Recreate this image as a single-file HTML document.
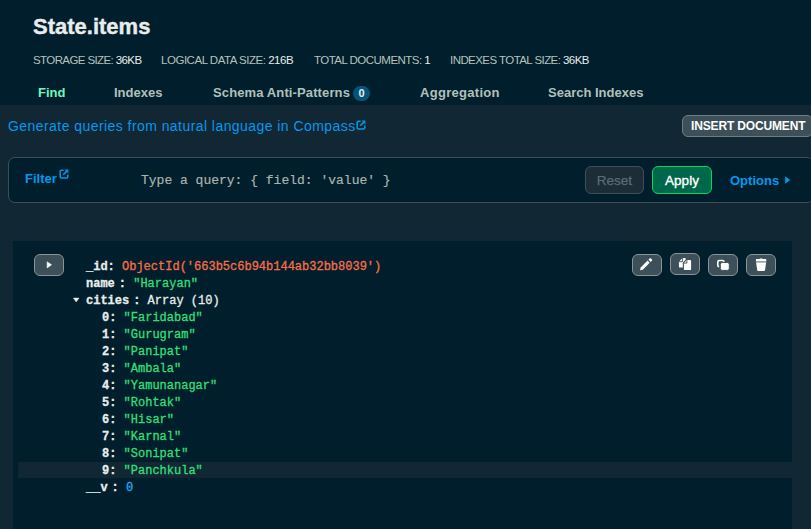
<!DOCTYPE html>
<html><head><meta charset="utf-8">
<style>
*{margin:0;padding:0;box-sizing:border-box}
html,body{width:811px;height:529px;overflow:hidden;background:#112733;font-family:"Liberation Sans",sans-serif}
.a{position:absolute;white-space:pre}
#hdr{position:absolute;left:0;top:0;width:811px;height:105px;background:#001E2B}
#title{left:33px;top:14px;font-size:22px;font-weight:bold;color:#E8EDEB;line-height:26px;-webkit-text-stroke:0.4px #E8EDEB}
.st{top:53px;font-size:11.5px;letter-spacing:-0.65px;color:#B6C2BE;line-height:14px}
.st b{font-weight:normal;color:#E8EDEB}
.tab{top:85px;font-size:13px;font-weight:bold;color:#B2C0BB;line-height:16px}
#badge{left:353px;top:86px;width:17px;height:15px;border-radius:8px;background:#03557A;color:#E8EDEB;font-size:11px;font-weight:bold;text-align:center;line-height:15px}
#link{left:8px;top:118px;font-size:14px;color:#0498EC;line-height:16px;letter-spacing:0.44px}
#ins{left:682px;top:115px;width:131px;height:22px;border-radius:6px;background:#3D4F58;border:1px solid #6F7E84}
#inst{left:691px;top:119px;font-size:12px;font-weight:bold;color:#FFFFFF;line-height:14px;letter-spacing:-0.15px}
#fbar{left:8px;top:157px;width:806px;height:46px;border-radius:7px;background:#001E2B;border:1px solid #3D4F58}
#ftxt{left:25px;top:172px;font-size:13px;font-weight:bold;color:#0498EC;line-height:14px}
#ph{left:141px;top:173px;font-family:"Liberation Mono",monospace;font-size:13px;color:#A8B3AE;-webkit-text-stroke:0.2px #A8B3AE;line-height:15px}
#reset{left:585px;top:166px;width:59px;height:28px;border-radius:6px;background:#1C2D38;border:1px solid #3D4F58;color:#5C6C75;font-size:13.5px;text-align:center;line-height:27px;-webkit-text-stroke:0.25px #5C6C75}
#apply{left:652px;top:166px;width:60px;height:28px;border-radius:6px;background:#00684A;border:1px solid #00D95E;color:#FFFFFF;font-size:13.5px;text-align:center;line-height:28px;-webkit-text-stroke:0.35px #fff}
#opt{left:730px;top:174px;font-size:13px;font-weight:bold;color:#0498EC;line-height:14px}
#card{left:13px;top:241px;width:779px;height:300px;background:#001E2B}
#hl{left:18px;top:462px;width:774px;height:16px;background:#112733}
.btn{top:254px;width:30px;height:22px;border-radius:6px;background:#3D4F58;border:1px solid #889397}
.code{font-family:"Liberation Mono",monospace;font-size:12px;line-height:17px;color:#E8EDEB;-webkit-text-stroke:0.3px currentColor}
.k{font-weight:bold;color:#E8EDEB}
.km{margin-right:4px}
.oid{color:#F96D4A}
.s{color:#33DF78}
.n{color:#22A8F0}
</style></head><body>
<div id="hdr"></div>
<div class="a" id="title">State.items</div>
<div class="a st" style="left:33px;letter-spacing:-0.6px">STORAGE SIZE: <b>36KB</b></div>
<div class="a st" style="left:161px;letter-spacing:-0.47px">LOGICAL DATA SIZE: <b>216B</b></div>
<div class="a st" style="left:314px;letter-spacing:-0.53px">TOTAL DOCUMENTS: <b>1</b></div>
<div class="a st" style="left:450px;letter-spacing:-0.56px">INDEXES TOTAL SIZE: <b>36KB</b></div>
<div class="a tab" style="left:38px;color:#71F6BA">Find</div>
<div class="a tab" style="left:114px">Indexes</div>
<div class="a tab" style="left:213px;letter-spacing:0.12px">Schema Anti-Patterns</div>
<div class="a" id="badge">0</div>
<div class="a tab" style="left:420px;letter-spacing:0.3px">Aggregation</div>
<div class="a tab" style="left:548px">Search Indexes</div>

<div class="a" id="link">Generate queries from natural language in Compass</div>
<svg class="a" style="left:356px;top:120px;color:#0498EC" width="10" height="10" viewBox="0 0 10 10"><path d="M4.6 1.3H2.4Q1.2 1.3 1.2 2.5V7.7Q1.2 8.9 2.4 8.9H7.6Q8.8 8.9 8.8 7.7V5.4" fill="none" stroke="currentColor" stroke-width="1.5"/><path d="M4.2 5.8L7.6 2.4" stroke="currentColor" stroke-width="1.5"/><path d="M5.6 0.6H9.4V4.4Z" fill="currentColor"/></svg>
<div class="a" id="ins"></div>
<div class="a" id="inst">INSERT DOCUMENT</div>

<div class="a" id="fbar"></div>
<div class="a" id="ftxt">Filter</div>
<svg class="a" style="left:59px;top:169px;color:#0498EC" width="10" height="10" viewBox="0 0 10 10"><path d="M4.6 1.3H2.4Q1.2 1.3 1.2 2.5V7.7Q1.2 8.9 2.4 8.9H7.6Q8.8 8.9 8.8 7.7V5.4" fill="none" stroke="currentColor" stroke-width="1.5"/><path d="M4.2 5.8L7.6 2.4" stroke="currentColor" stroke-width="1.5"/><path d="M5.6 0.6H9.4V4.4Z" fill="currentColor"/></svg>
<div class="a" id="ph">Type a query: { field: 'value' }</div>
<div class="a" id="reset">Reset</div>
<div class="a" id="apply">Apply</div>
<div class="a" id="opt">Options</div>
<svg class="a" style="left:784px;top:175px" width="8" height="10" viewBox="0 0 8 10"><path d="M1.2 1.2L6.2 5L1.2 8.8Z" fill="#0498EC"/></svg>

<div class="a" id="card"></div>
<div class="a" id="hl"></div>
<div class="a btn" style="left:34px"></div>
<svg class="a" style="left:34px;top:254px" width="30" height="22" viewBox="0 0 30 22"><path d="M13.1 7.8L17.6 10.8L13.1 13.9Z" fill="#fff" stroke="#fff" stroke-width="0.5" stroke-linejoin="round"/></svg>
<div class="a btn" style="left:632px"></div>
<svg class="a" style="left:632px;top:254px" width="30" height="22" viewBox="0 0 30 22"><path d="M8.1 16.2L8.6 13.5L15.6 6.6L17.7 8.7L10.8 15.7Z" fill="#fff"/><path d="M16.4 5.6L17.5 4.5Q18.3 3.8 19.1 4.5L19.8 5.2Q20.5 6 19.8 6.8L18.7 7.9Z" fill="#fff"/></svg>
<div class="a btn" style="left:670px;top:253px"></div>
<svg class="a" style="left:670px;top:253px" width="30" height="22" viewBox="0 0 30 22"><path d="M8.9 8.7L12.600000000000001 5H14.80Q15.7 5 15.7 5.90V13.70Q15.7 14.6 14.80 14.6H9.80Q8.9 14.6 8.9 13.70Z" fill="#fff"/><path d="M12.60 5V8.70H8.9" fill="none" stroke="#3D4F58" stroke-width="0.9"/><path d="M13.9 10.1L16.9 7.1H20.20Q21.1 7.1 21.1 8.00V16.20Q21.1 17.1 20.20 17.1H14.80Q13.9 17.1 13.9 16.20Z" fill="#fff" stroke="#3D4F58" stroke-width="2.2" paint-order="stroke"/><path d="M16.90 7.1V10.10H13.9" fill="none" stroke="#3D4F58" stroke-width="0.9"/></svg>
<div class="a btn" style="left:708px"></div>
<svg class="a" style="left:708px;top:254px" width="30" height="22" viewBox="0 0 30 22"><path d="M11.2 12.6Q9.8 12.6 9.8 11.2V7.9Q9.8 6.5 11.2 6.5H14.6Q16 6.5 16 7.9" fill="none" stroke="#fff" stroke-width="1.6"/><rect x="12.3" y="8.4" width="9" height="8" rx="2" fill="#fff" stroke="#3D4F58" stroke-width="1"/></svg>
<div class="a btn" style="left:746px"></div>
<svg class="a" style="left:746px;top:254px" width="30" height="22" viewBox="0 0 30 22"><path d="M9.9 5.6Q9.9 5 10.5 5H13.2Q13.6 4.4 14.2 4.4H16Q16.6 4.4 17 5H19.7Q20.3 5 20.3 5.6V7.3H9.9Z" fill="#fff"/><rect x="9.9" y="7.3" width="10.4" height="1.2" fill="#fff" opacity="0.45"/><path d="M10.1 8.5H20.1L19 16.2Q18.9 17 18 17H12.2Q11.3 17 11.2 16.2Z" fill="#fff"/></svg>

<div class="a code" style="left:86px;top:259px"><span class="k">_id:</span> <span class="oid">ObjectId('663b5c6b94b144ab32bb8039')</span></div>
<div class="a code" style="left:86px;top:276px"><span class="k km">name</span><b>:</b> <span class="s">"Harayan"</span></div>
<svg class="a" style="left:72px;top:296px" width="9" height="8" viewBox="0 0 9 8"><path d="M1.3 2H7.1L4.2 6Z" fill="#E8EDEB" stroke="#E8EDEB" stroke-width="0.4" stroke-linejoin="round"/></svg>
<div class="a code" style="left:86px;top:293px"><span class="k km">cities</span><b>:</b> Array (10)</div>
<div class="a code" style="left:102px;top:310px"><span class="k">0:</span> <span class="s">"Faridabad"</span></div>
<div class="a code" style="left:102px;top:327px"><span class="k">1:</span> <span class="s">"Gurugram"</span></div>
<div class="a code" style="left:102px;top:344px"><span class="k">2:</span> <span class="s">"Panipat"</span></div>
<div class="a code" style="left:102px;top:361px"><span class="k">3:</span> <span class="s">"Ambala"</span></div>
<div class="a code" style="left:102px;top:378px"><span class="k">4:</span> <span class="s">"Yamunanagar"</span></div>
<div class="a code" style="left:102px;top:395px"><span class="k">5:</span> <span class="s">"Rohtak"</span></div>
<div class="a code" style="left:102px;top:412px"><span class="k">6:</span> <span class="s">"Hisar"</span></div>
<div class="a code" style="left:102px;top:429px"><span class="k">7:</span> <span class="s">"Karnal"</span></div>
<div class="a code" style="left:102px;top:446px"><span class="k">8:</span> <span class="s">"Sonipat"</span></div>
<div class="a code" style="left:102px;top:463px"><span class="k">9:</span> <span class="s">"Panchkula"</span></div>
<div class="a code" style="left:86px;top:480px"><span class="k km">__v</span><b>:</b> <span class="n">0</span></div>
</body></html>
